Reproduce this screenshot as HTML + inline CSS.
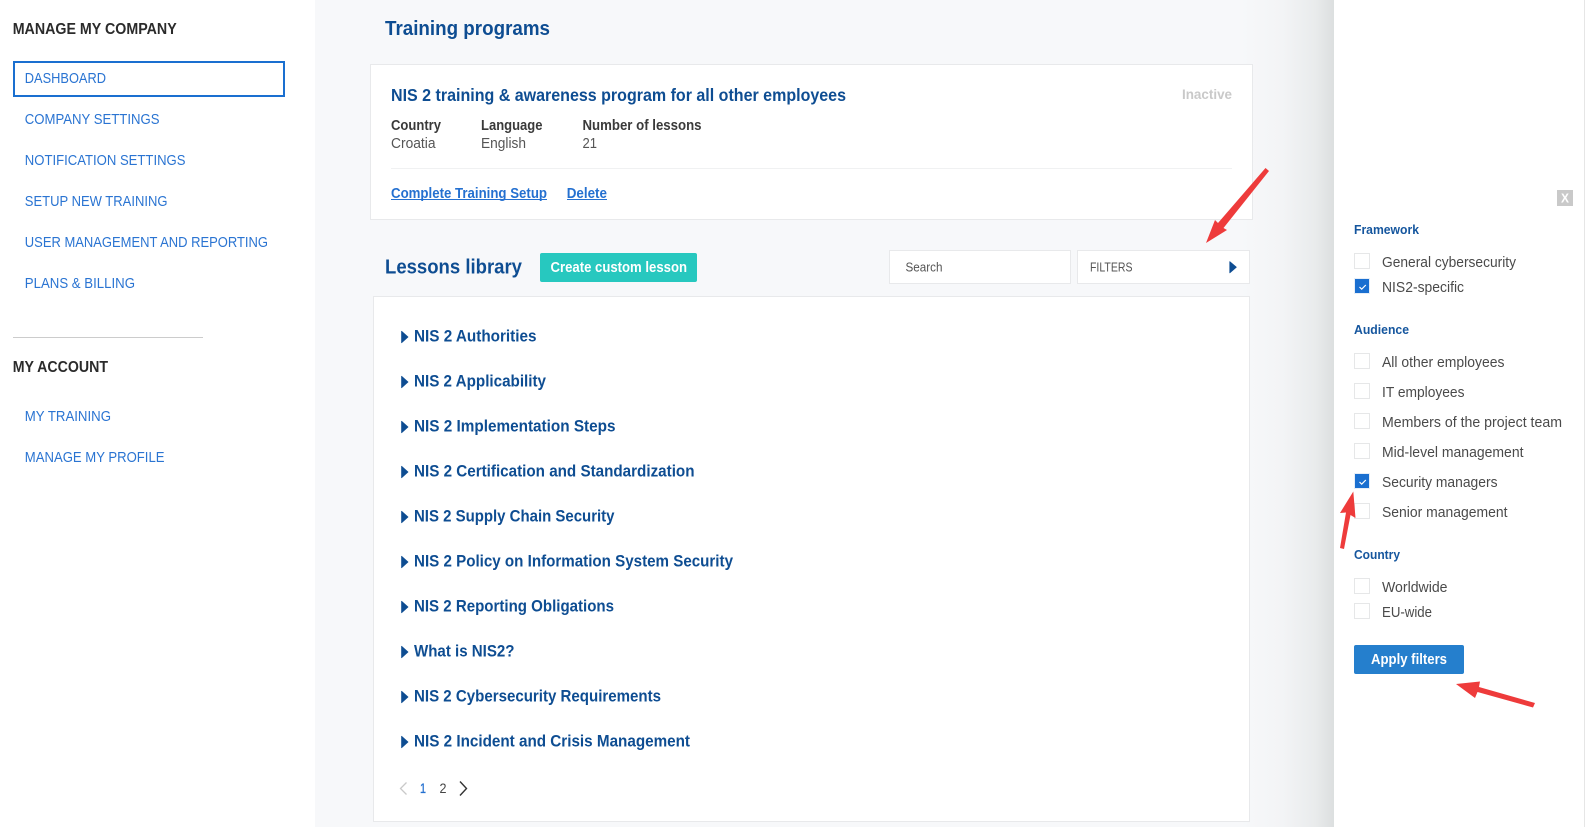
<!DOCTYPE html>
<html lang="en">
<head>
<meta charset="utf-8">
<title>Training programs</title>
<style>
html,body{margin:0;padding:0;width:1585px;height:827px;overflow:hidden;background:#fff}
svg{display:block;position:absolute;left:0;top:0}
text{font-family:"Liberation Sans",Arial,sans-serif}
.h{font-weight:700;font-size:15.5px;fill:#2b2b2b}
.n{font-size:14.3px;fill:#2a74d2}
.t{font-weight:700;font-size:20.5px;fill:#0e4d92}
.l{font-weight:700;font-size:16.4px;fill:#0e4d92}
.b{font-weight:700;font-size:14.3px;fill:#3a3a3a}
.v{font-size:14.3px;fill:#555}
.a{font-weight:700;font-size:14.3px;fill:#2470d0}
.f{font-weight:700;font-size:13.2px;fill:#15569e}
.c{font-size:14.3px;fill:#4a4a4a}
.w{font-weight:700;font-size:14.3px;fill:#fff}
.s{font-size:12.8px;fill:#555}
.box{fill:#fff;stroke:#e8e9eb;stroke-width:1}
.cb{fill:#fff;stroke:#e6e7e8;stroke-width:1}
.on{fill:#1a6fd0;stroke:#e6eef8;stroke-width:1}
.ck{fill:none;stroke:#fff;stroke-width:1.2}
.arr{fill:#ee3b3b}
.tri{fill:#0e4d92;stroke:#0e4d92;stroke-width:.8;stroke-linejoin:round}
</style>
</head>
<body>
<svg width="1585" height="827" viewBox="0 0 1585 827" xmlns="http://www.w3.org/2000/svg">
<defs>
<linearGradient id="sh" x1="0" x2="1" y1="0" y2="0">
<stop offset="0" stop-color="#f7f8fa"/>
<stop offset=".45" stop-color="#f3f4f6"/>
<stop offset=".8" stop-color="#e9ebec"/>
<stop offset="1" stop-color="#dcdfdf"/>
</linearGradient>
</defs>

<!-- backgrounds -->
<rect x="0" y="0" width="315" height="827" fill="#fff"/>
<rect x="315" y="0" width="1019" height="827" fill="#f7f8fa"/>
<rect x="1240" y="0" width="94" height="827" fill="url(#sh)"/>
<rect x="1334" y="0" width="251" height="827" fill="#fff"/>
<rect x="1584" y="0" width="1" height="827" fill="#e6e6e6"/>

<!-- sidebar -->
<text class="h" x="12.7" y="34" textLength="164" lengthAdjust="spacingAndGlyphs">MANAGE MY COMPANY</text>
<rect x="14" y="62" width="270" height="34" fill="#fff" stroke="#1a6fd0" stroke-width="2"/>
<text class="n" x="24.8" y="83" textLength="81.2" lengthAdjust="spacingAndGlyphs">DASHBOARD</text>
<text class="n" x="24.8" y="124" textLength="134.7" lengthAdjust="spacingAndGlyphs">COMPANY SETTINGS</text>
<text class="n" x="24.8" y="165" textLength="160.7" lengthAdjust="spacingAndGlyphs">NOTIFICATION SETTINGS</text>
<text class="n" x="24.8" y="206" textLength="142.7" lengthAdjust="spacingAndGlyphs">SETUP NEW TRAINING</text>
<text class="n" x="24.8" y="247" textLength="243.2" lengthAdjust="spacingAndGlyphs">USER MANAGEMENT AND REPORTING</text>
<text class="n" x="24.8" y="288" textLength="110.2" lengthAdjust="spacingAndGlyphs">PLANS &amp; BILLING</text>
<rect x="13" y="337" width="190" height="1" fill="#cccccc"/>
<text class="h" x="12.7" y="372" textLength="95.3" lengthAdjust="spacingAndGlyphs">MY ACCOUNT</text>
<text class="n" x="24.8" y="421" textLength="86.2" lengthAdjust="spacingAndGlyphs">MY TRAINING</text>
<text class="n" x="24.8" y="462" textLength="139.7" lengthAdjust="spacingAndGlyphs">MANAGE MY PROFILE</text>

<!-- training card -->
<text class="t" x="385" y="35" textLength="165" lengthAdjust="spacingAndGlyphs">Training programs</text>
<rect class="box" x="370.5" y="64.5" width="882" height="155"/>
<text x="391" y="101" font-size="17.3" font-weight="700" fill="#0e4d92" textLength="455" lengthAdjust="spacingAndGlyphs">NIS 2 training &amp; awareness program for all other employees</text>
<text x="1182" y="99" font-size="14" font-weight="700" fill="#c9c9c9" textLength="50" lengthAdjust="spacingAndGlyphs">Inactive</text>
<text class="b" x="391" y="130" textLength="50" lengthAdjust="spacingAndGlyphs">Country</text>
<text class="b" x="481" y="130" textLength="61.5" lengthAdjust="spacingAndGlyphs">Language</text>
<text class="b" x="582.5" y="130" textLength="119" lengthAdjust="spacingAndGlyphs">Number of lessons</text>
<text class="v" x="391" y="148" textLength="44.5" lengthAdjust="spacingAndGlyphs">Croatia</text>
<text class="v" x="481" y="148" textLength="45" lengthAdjust="spacingAndGlyphs">English</text>
<text class="v" x="582.5" y="148" textLength="14.5" lengthAdjust="spacingAndGlyphs">21</text>
<rect x="391" y="168" width="841" height="1" fill="#f0f1f2"/>
<text class="a" x="391" y="198" textLength="156" lengthAdjust="spacingAndGlyphs">Complete Training Setup</text>
<rect x="391" y="199" width="156" height="1" fill="#2470d0"/>
<text class="a" x="566.7" y="198" textLength="40.3" lengthAdjust="spacingAndGlyphs">Delete</text>
<rect x="567" y="199" width="40" height="1" fill="#2470d0"/>

<!-- lessons header -->
<text class="t" x="385" y="273.5" textLength="137" lengthAdjust="spacingAndGlyphs">Lessons library</text>
<rect x="540" y="253" width="157" height="29" rx="2" fill="#27c8bf"/>
<text class="w" x="550.5" y="272" textLength="136.5" lengthAdjust="spacingAndGlyphs">Create custom lesson</text>
<rect class="box" x="889.5" y="250.5" width="181" height="33"/>
<text class="s" x="905.5" y="271.5" textLength="37" lengthAdjust="spacingAndGlyphs">Search</text>
<rect class="box" x="1077.5" y="250.5" width="172" height="33"/>
<text class="s" x="1090" y="271.5" textLength="42.5" lengthAdjust="spacingAndGlyphs">FILTERS</text>
<path class="tri" d="M1229.8 261.7 L1236.3 267.2 L1229.8 272.8 Z"/>

<!-- lessons list -->
<rect class="box" x="373.5" y="296.5" width="876" height="525"/>
<path class="tri" d="M401.6 331.3 L408 337 L401.6 342.7 Z"/>
<path class="tri" d="M401.6 376.3 L408 382 L401.6 387.7 Z"/>
<path class="tri" d="M401.6 421.3 L408 427 L401.6 432.7 Z"/>
<path class="tri" d="M401.6 466.3 L408 472 L401.6 477.7 Z"/>
<path class="tri" d="M401.6 511.3 L408 517 L401.6 522.7 Z"/>
<path class="tri" d="M401.6 556.3 L408 562 L401.6 567.7 Z"/>
<path class="tri" d="M401.6 601.3 L408 607 L401.6 612.7 Z"/>
<path class="tri" d="M401.6 646.3 L408 652 L401.6 657.7 Z"/>
<path class="tri" d="M401.6 691.3 L408 697 L401.6 702.7 Z"/>
<path class="tri" d="M401.6 736.3 L408 742 L401.6 747.7 Z"/>
<text class="l" x="414" y="341.7" textLength="122.5" lengthAdjust="spacingAndGlyphs">NIS 2 Authorities</text>
<text class="l" x="414" y="386.7" textLength="132" lengthAdjust="spacingAndGlyphs">NIS 2 Applicability</text>
<text class="l" x="414" y="431.7" textLength="201.5" lengthAdjust="spacingAndGlyphs">NIS 2 Implementation Steps</text>
<text class="l" x="414" y="476.7" textLength="280.5" lengthAdjust="spacingAndGlyphs">NIS 2 Certification and Standardization</text>
<text class="l" x="414" y="521.7" textLength="200.5" lengthAdjust="spacingAndGlyphs">NIS 2 Supply Chain Security</text>
<text class="l" x="414" y="566.7" textLength="319" lengthAdjust="spacingAndGlyphs">NIS 2 Policy on Information System Security</text>
<text class="l" x="414" y="611.7" textLength="200" lengthAdjust="spacingAndGlyphs">NIS 2 Reporting Obligations</text>
<text class="l" x="414" y="656.7" textLength="100.5" lengthAdjust="spacingAndGlyphs">What is NIS2?</text>
<text class="l" x="414" y="701.7" textLength="247" lengthAdjust="spacingAndGlyphs">NIS 2 Cybersecurity Requirements</text>
<text class="l" x="414" y="746.7" textLength="276" lengthAdjust="spacingAndGlyphs">NIS 2 Incident and Crisis Management</text>

<!-- pagination -->
<path d="M406.5 782.5 L400.5 788.5 L406.5 794.5" fill="none" stroke="#c9c9c9" stroke-width="1.3"/>
<text x="420" y="793" font-size="14" fill="#2470d0" stroke="#2470d0" stroke-width=".3" textLength="6" lengthAdjust="spacingAndGlyphs">1</text>
<text x="439.5" y="793" font-size="14" fill="#444" textLength="7" lengthAdjust="spacingAndGlyphs">2</text>
<path d="M460 781.5 L466.5 788.5 L460 795.5" fill="none" stroke="#333" stroke-width="1.4"/>

<!-- filter panel -->
<rect x="1557" y="190" width="16" height="16" fill="#c9c9c9"/>
<text x="1561" y="202.3" font-size="12.5" font-weight="700" fill="#fff" textLength="8" lengthAdjust="spacingAndGlyphs">X</text>

<text class="f" x="1354" y="234" textLength="65" lengthAdjust="spacingAndGlyphs">Framework</text>
<rect class="cb" x="1354.5" y="253.5" width="15" height="15"/>
<text class="c" x="1382" y="267" textLength="134" lengthAdjust="spacingAndGlyphs">General cybersecurity</text>
<rect class="on" x="1354.5" y="278.5" width="15" height="15"/>
<path class="ck" d="M1359.5 287 L1361.7 289.2 L1365.8 285"/>
<text class="c" x="1382" y="292" textLength="82" lengthAdjust="spacingAndGlyphs">NIS2-specific</text>

<text class="f" x="1354" y="334" textLength="55" lengthAdjust="spacingAndGlyphs">Audience</text>
<rect class="cb" x="1354.5" y="353.5" width="15" height="15"/>
<text class="c" x="1382" y="367" textLength="122.5" lengthAdjust="spacingAndGlyphs">All other employees</text>
<rect class="cb" x="1354.5" y="383.5" width="15" height="15"/>
<text class="c" x="1382" y="397" textLength="82.5" lengthAdjust="spacingAndGlyphs">IT employees</text>
<rect class="cb" x="1354.5" y="413.5" width="15" height="15"/>
<text class="c" x="1382" y="427" textLength="180" lengthAdjust="spacingAndGlyphs">Members of the project team</text>
<rect class="cb" x="1354.5" y="443.5" width="15" height="15"/>
<text class="c" x="1382" y="457" textLength="141.5" lengthAdjust="spacingAndGlyphs">Mid-level management</text>
<rect class="on" x="1354.5" y="473.5" width="15" height="15"/>
<path class="ck" d="M1359.5 482 L1361.7 484.2 L1365.8 480"/>
<text class="c" x="1382" y="487" textLength="115.5" lengthAdjust="spacingAndGlyphs">Security managers</text>
<rect class="cb" x="1354.5" y="503.5" width="15" height="15"/>
<text class="c" x="1382" y="517" textLength="125.5" lengthAdjust="spacingAndGlyphs">Senior management</text>

<text class="f" x="1354" y="559" textLength="46" lengthAdjust="spacingAndGlyphs">Country</text>
<rect class="cb" x="1354.5" y="578.5" width="15" height="15"/>
<text class="c" x="1382" y="592" textLength="65.5" lengthAdjust="spacingAndGlyphs">Worldwide</text>
<rect class="cb" x="1354.5" y="603.5" width="15" height="15"/>
<text class="c" x="1382" y="617" textLength="50" lengthAdjust="spacingAndGlyphs">EU-wide</text>

<rect x="1354" y="645" width="110" height="29" rx="2" fill="#257fcd"/>
<text class="w" x="1371" y="664" textLength="76" lengthAdjust="spacingAndGlyphs">Apply filters</text>

<!-- annotation arrows -->
<path class="arr" d="M1265.5 168 L1269 171 L1223.5 228 L1227 230 L1206 243 L1215 220 L1218 223 Z"/>
<path class="arr" d="M1340 548 L1344 549 L1350.5 515 L1355.5 518 L1353.3 491.5 L1340 513 L1346 512.5 Z"/>
<path class="arr" d="M1456 684 L1480 681.5 L1479 687 L1535 703 L1533 707.5 L1477.5 692 L1475 698 Z"/>
</svg>
</body>
</html>
